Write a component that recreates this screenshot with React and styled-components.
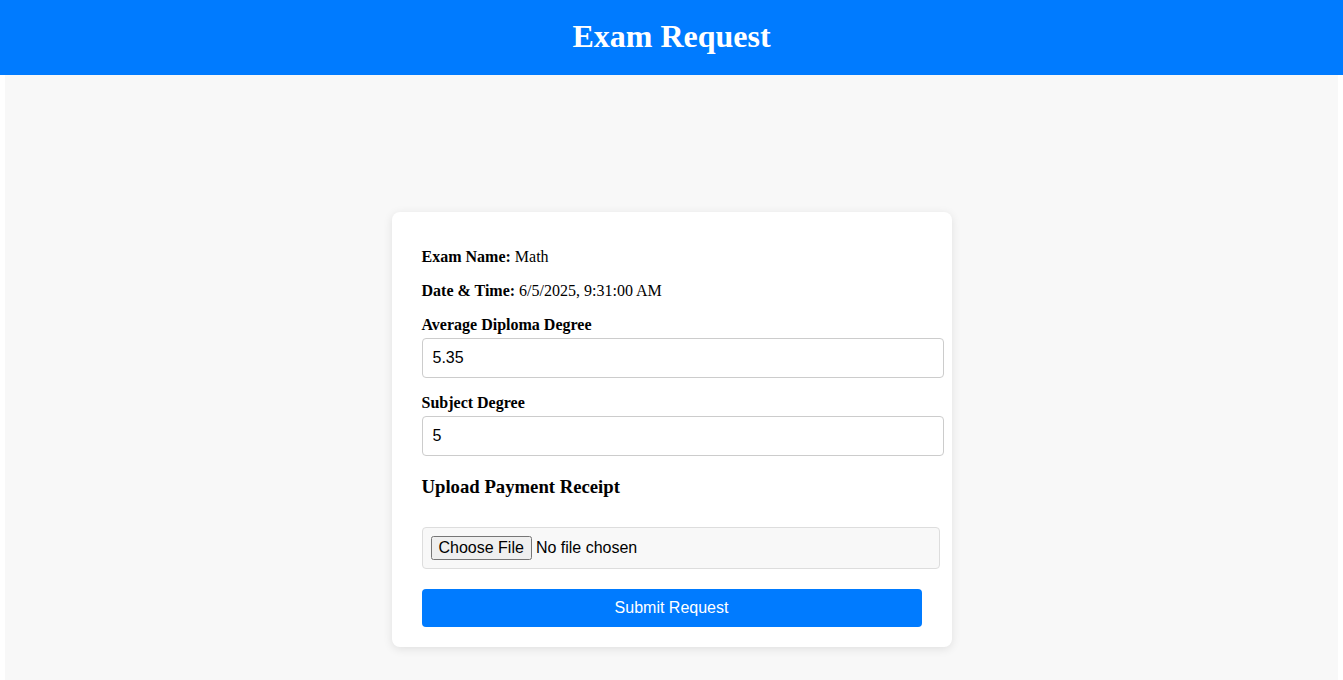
import React from 'react'
import styled, { createGlobalStyle } from 'styled-components'

const GlobalStyle = createGlobalStyle`
  body {
    margin: 0;
    background: #ffffff;
    font-family: "Liberation Serif", "Times New Roman", serif;
  }
`;

const Header = styled.header`
  height: 75px;
  background: #007bff;
  color: #ffffff;
  display: flex;
  align-items: center;
  justify-content: center;
  h1 {
    margin: 0 0 2px;
    font-size: 32px;
    font-weight: 700;
  }
`;

const Main = styled.main`
  margin: 0 5px;
  min-height: 605px;
  background: #f8f8f8;
  display: flex;
  justify-content: center;
  align-items: flex-start;
  padding-top: 137px;
  box-sizing: border-box;
`;

const Card = styled.form`
  width: 500px;
  padding: 20px 30px;
  background: #ffffff;
  border-radius: 8px;
  box-shadow: 0 2px 10px rgba(0, 0, 0, 0.1);
`;

const Info = styled.p`
  margin: 16px 0;
  font-size: 16px;
  line-height: 18px;
  color: #000;
  strong {
    font-weight: 700;
  }
`;

const Label = styled.label`
  display: block;
  font-size: 16px;
  line-height: 18px;
  font-weight: 700;
  margin-bottom: 4px;
`;

const TextInput = styled.input`
  display: block;
  width: 100%;
  padding: 10px;
  margin: 0 0 16px;
  border: 1px solid #ccc;
  border-radius: 4px;
  font-family: "Liberation Sans", Arial, sans-serif;
  font-size: 16px;
  line-height: 18px;
  color: #000;
  background: #fff;
`;

const SectionTitle = styled.h3`
  font-size: 18.72px;
  font-weight: 700;
  margin: 20px 0 29px;
`;

const FileInput = styled.input`
  display: block;
  width: 100%;
  padding: 8px;
  margin: 0 0 20px;
  border: 1px solid #ddd;
  border-radius: 4px;
  background: #f8f8f8;
  font-family: "Liberation Sans", Arial, sans-serif;
  font-size: 16px;
`;

const SubmitButton = styled.button`
  display: block;
  width: 100%;
  padding: 10px;
  border: none;
  border-radius: 4px;
  background: #007bff;
  color: #ffffff;
  font-family: "Liberation Sans", Arial, sans-serif;
  font-size: 16px;
  line-height: 18px;
  cursor: pointer;
`;

export default function App() {
  return (
    <>
      <GlobalStyle />
      <Header>
        <h1>Exam Request</h1>
      </Header>
      <Main>
        <Card onSubmit={e => e.preventDefault()}>
          <Info><strong>Exam Name:</strong> Math</Info>
          <Info><strong>Date &amp; Time:</strong> 6/5/2025, 9:31:00 AM</Info>
          <Label>Average Diploma Degree</Label>
          <TextInput type="text" defaultValue="5.35" />
          <Label>Subject Degree</Label>
          <TextInput type="text" defaultValue="5" />
          <SectionTitle>Upload Payment Receipt</SectionTitle>
          <FileInput type="file" />
          <SubmitButton type="submit">Submit Request</SubmitButton>
        </Card>
      </Main>
    </>
  )
}
